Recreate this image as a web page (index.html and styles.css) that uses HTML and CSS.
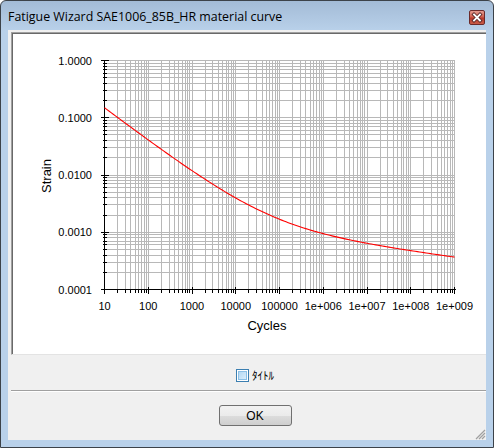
FILE: index.html
```html
<!DOCTYPE html>
<html lang="en">
<head>
    <meta charset="UTF-8">
    <title>Fatigue Wizard SAE1006_85B_HR material curve</title>
    <link rel="stylesheet" href="styles.css">
</head>
<body>
    <div class="window">
        <div class="titlebar">
            <span class="title">Fatigue Wizard SAE1006_85B_HR material curve</span>
            <span class="close">
                <svg width="16" height="15" viewBox="0 0 16 15">
                    <path d="M5 4.5 L11 10.5 M11 4.5 L5 10.5" stroke="#5a2a2a" stroke-width="3.6" stroke-linecap="square"/>
                    <path d="M5 4.5 L11 10.5 M11 4.5 L5 10.5" stroke="#ffffff" stroke-width="1.8" stroke-linecap="square"/>
                </svg>
            </span>
        </div>
        <div class="client">
            <div class="chart-panel">
                <svg id="chart" width="474" height="321" viewBox="12 33 474 321"></svg>
            </div>
            <div class="option-row">
                <label class="check-label">
                    <span class="check"><span class="check-fill"></span></span>
                    <span class="check-text">ﾀｲﾄﾙ</span>
                </label>
            </div>
            <div class="separator"></div>
            <div class="button-row">
                <button type="button" class="ok-button">OK</button>
            </div>
            <svg class="grip" width="12" height="12" viewBox="0 0 12 12">
                <path d="M11 2 L2 11 M11 5 L5 11 M11 8 L8 11" stroke="#a0a0a0" stroke-width="1.2"/>
            </svg>
        </div>
    </div>

    <script src="chart.js"></script>
</body>
</html>
```

FILE: styles.css
```css
body {
    margin: 0;
    background-color: #ffffff;
}

.window {
    width: 494px;
    height: 448px;
    box-sizing: border-box;
    border: 1px solid #3c4249;
    border-radius: 6px 6px 0 0;
    background: linear-gradient(to bottom, #a3bbd6 0, #b9d1ea 30px, #b9d1ea 100%);
    display: flex;
    flex-direction: column;
    padding: 0 7px 7px 7px;
}

.titlebar {
    height: 29px;
    display: flex;
    align-items: center;
    justify-content: space-between;
    flex-shrink: 0;
}

.title {
    font-family: "Open Sans", "Liberation Sans", sans-serif;
    font-size: 12.4px;
    color: #000000;
    margin-top: 2px;
}

.close {
    width: 16px;
    height: 15px;
    box-sizing: border-box;
    border: 1px solid #6b2a2a;
    border-radius: 2px;
    background: linear-gradient(to bottom, #e39a8f 0, #d0604f 45%, #b8382a 55%, #c95d4a 100%);
    margin-top: 3px;
    margin-right: 1px;
    display: flex;
}

.close svg {
    margin: -1px;
}

.client {
    position: relative;
    flex: 1;
    background-color: #f0f0f0;
    display: flex;
    flex-direction: column;
}

.chart-panel {
    margin: 2px 0 0 3px;
    height: 323px;
    box-sizing: border-box;
    border-top: 1px solid #a0a0a0;
    border-left: 1px solid #a0a0a0;
    border-bottom: 1px solid #e3e3e3;
    background-color: #ffffff;
    box-shadow: inset 1px 1px 0 #696969;
}

#chart {
    display: block;
    font-family: "Liberation Sans", Arial, sans-serif;
}

.grid line {
    stroke: #b8b8b8;
    stroke-width: 1;
}

.axis line {
    stroke: #000000;
    stroke-width: 1;
}

.tick-label {
    font-size: 11px;
    fill: #000000;
}

.axis-title {
    font-size: 13px;
    fill: #000000;
}

.curve {
    fill: none;
    stroke: #ff0000;
    stroke-width: 1.1;
}

.option-row {
    display: flex;
    justify-content: center;
    padding: 14px 0 0 16px;
    height: 13px;
}

.check-label {
    display: flex;
    align-items: center;
    gap: 3px;
}

.check {
    width: 13px;
    height: 13px;
    box-sizing: border-box;
    border: 1px solid #3c7fb1;
    background-color: #ffffff;
    padding: 1px;
    display: flex;
}

.check-fill {
    flex: 1;
    border: 1px solid #8cc0e6;
    background: linear-gradient(135deg, #b4d8f3 0, #daedfb 100%);
}

.check-text {
    font-family: "Noto Sans CJK JP", sans-serif;
    font-size: 11px;
    color: #000000;
    line-height: 13px;
}

.separator {
    margin: 8px 0 0 3px;
    height: 0;
    border-top: 1px solid #a0a0a0;
    border-bottom: 1px solid #ffffff;
}

.button-row {
    display: flex;
    justify-content: center;
    padding: 13px 0 0 16px;
}

.ok-button {
    width: 73px;
    height: 21px;
    box-sizing: border-box;
    border: 1px solid #707070;
    border-radius: 3px;
    background: linear-gradient(to bottom, #f2f2f2 0, #ebebeb 50%, #dddddd 50%, #cfcfcf 100%);
    font-family: "Liberation Sans", Arial, sans-serif;
    font-size: 12px;
    color: #000000;
    padding: 0;
}

.grip {
    position: absolute;
    right: 0;
    bottom: 0;
}
```

FILE: chart.js
```js
(function () {
    var NS = 'http://www.w3.org/2000/svg';
    var svg = document.getElementById('chart');

    // plot area in page pixels (the svg viewBox is page coordinates)
    var pLeft = 104.5, pRight = 454.5, pTop = 60.5, pBottom = 289.5;
    var dx = (pRight - pLeft) / 8;
    var dy = (pBottom - pTop) / 4;

    function px(v) {
        return Math.round(v - 0.5) + 0.5;
    }

    function group(cls) {
        var g = document.createElementNS(NS, 'g');
        g.setAttribute('class', cls);
        g.setAttribute('shape-rendering', 'crispEdges');
        svg.appendChild(g);
        return g;
    }

    function line(g, x1, y1, x2, y2) {
        var l = document.createElementNS(NS, 'line');
        l.setAttribute('x1', x1);
        l.setAttribute('y1', y1);
        l.setAttribute('x2', x2);
        l.setAttribute('y2', y2);
        g.appendChild(l);
    }

    function text(str, x, y, anchor, cls, rotate) {
        var t = document.createElementNS(NS, 'text');
        t.setAttribute('x', x);
        t.setAttribute('y', y);
        t.setAttribute('text-anchor', anchor);
        t.setAttribute('class', cls);
        if (rotate) {
            t.setAttribute('transform', 'rotate(-90 ' + x + ' ' + y + ')');
        }
        t.textContent = str;
        svg.appendChild(t);
    }

    // grid
    var grid = group('grid');
    for (var d = 0; d < 8; d++) {
        for (var k = 1; k <= 9; k++) {
            if (d === 0 && k === 1) continue;
            var x = px(pLeft + dx * (d + Math.log10(k)));
            line(grid, x, pTop, x, pBottom);
        }
    }
    line(grid, pRight, pTop, pRight, pBottom);
    for (var d = 0; d < 4; d++) {
        for (var k = 1; k <= 9; k++) {
            if (d === 0 && k === 1) continue;
            var y = px(pBottom - dy * (d + Math.log10(k)));
            line(grid, pLeft, y, pRight, y);
        }
    }
    line(grid, pLeft, pTop, pRight, pTop);

    // axes and ticks
    var axis = group('axis');
    line(axis, pLeft, pTop, pLeft, pBottom + 1);
    line(axis, pLeft, pBottom, pRight + 1, pBottom);

    for (var d = 0; d <= 8; d++) {
        var x = px(pLeft + dx * d);
        line(axis, x, pBottom - 3, x, pBottom + 4);
        if (d < 8) {
            for (var k = 2; k <= 9; k++) {
                var xm = px(pLeft + dx * (d + Math.log10(k)));
                line(axis, xm, pBottom, xm, pBottom + 3);
            }
        }
    }
    for (var d = 0; d <= 4; d++) {
        var y = px(pBottom - dy * d);
        line(axis, pLeft - 4, y, pLeft + 4, y);
        if (d < 4) {
            for (var k = 2; k <= 9; k++) {
                var ym = px(pBottom - dy * (d + Math.log10(k)));
                line(axis, pLeft - 2, ym, pLeft + 2, ym);
            }
        }
    }

    // labels
    var xLabels = ['10', '100', '1000', '10000', '100000', '1e+006', '1e+007', '1e+008', '1e+009'];
    for (var i = 0; i < xLabels.length; i++) {
        text(xLabels[i], pLeft + dx * i, 310, 'middle', 'tick-label');
    }
    var yLabels = ['0.0001', '0.0010', '0.0100', '0.1000', '1.0000'];
    for (var i = 0; i < yLabels.length; i++) {
        text(yLabels[i], 92, pBottom - dy * i + 4, 'end', 'tick-label');
    }
    text('Cycles', 267, 330, 'middle', 'axis-title');
    text('Strain', 51, 176, 'middle', 'axis-title', true);

    // strain-life curve
    var pts = [];
    for (var n = 1; n <= 9.0001; n += 0.05) {
        var e = 3.64e-4 * Math.pow(10, -0.105 * (n - 9)) + 0.147 * Math.pow(10, -0.576 * (n - 1));
        var cx = pLeft + dx * (n - 1);
        var cy = pTop - dy * Math.log10(e);
        pts.push(cx.toFixed(2) + ',' + cy.toFixed(2));
    }
    var curve = document.createElementNS(NS, 'polyline');
    curve.setAttribute('points', pts.join(' '));
    curve.setAttribute('class', 'curve');
    svg.appendChild(curve);
})();
```
